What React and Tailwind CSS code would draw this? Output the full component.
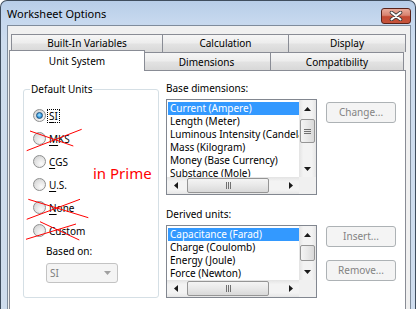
import React from "react";

const TAB_BG =
  "bg-[linear-gradient(#f6f6f6,#ededed_45%,#e2e2e2_55%,#d8d8d8)]";

function Arrow({ dir, color = "#1a1a1a" }) {
  const pts = {
    up: "0,4 3.5,0 7,4",
    down: "0,0 7,0 3.5,4",
    left: "4,0 4,7 0,3.5",
    right: "0,0 4,3.5 0,7",
  }[dir];
  const vert = dir === "up" || dir === "down";
  return (
    <svg width={vert ? 7 : 4} height={vert ? 4 : 7} viewBox={vert ? "0 0 7 4" : "0 0 4 7"}>
      <polygon points={pts} fill={color} />
    </svg>
  );
}

function VScroll({ thumbTop, thumbH }) {
  return (
    <div className="flex flex-col bg-[linear-gradient(to_right,#e3e3e3,#f3f3f3_25%,#f3f3f3_75%,#e6e6e6)]">
      <div className="h-[17px] flex items-center justify-center">
        <Arrow dir="up" />
      </div>
      <div className="flex-1">
        <div
          className="mx-px border border-[#959595] rounded-[2px] bg-[linear-gradient(to_right,#f4f4f4,#e8e8e8_50%,#d9d9d9)] flex flex-col items-center justify-center gap-px"
          style={{ marginTop: thumbTop, height: thumbH }}
        >
          {thumbH > 20 && (
            <>
              <div className="w-[7px] h-px bg-[#707070]" />
              <div className="w-[7px] h-px bg-[#707070]" />
              <div className="w-[7px] h-px bg-[#707070]" />
            </>
          )}
        </div>
      </div>
      <div className="h-[17px] flex items-center justify-center">
        <Arrow dir="down" />
      </div>
    </div>
  );
}

function HScroll() {
  return (
    <div className="flex flex-row bg-[linear-gradient(#e3e3e3,#f3f3f3_25%,#f3f3f3_75%,#e6e6e6)]">
      <div className="w-[17px] flex items-center justify-center">
        <Arrow dir="left" />
      </div>
      <div className="flex-1 flex items-stretch">
        <div className="ml-[3px] w-[82px] my-px border border-[#959595] rounded-[2px] bg-[linear-gradient(#f4f4f4,#e8e8e8_50%,#d9d9d9)] flex items-center justify-center gap-px">
          <div className="w-px h-[7px] bg-[#707070]" />
          <div className="w-px h-[7px] bg-[#707070]" />
          <div className="w-px h-[7px] bg-[#707070]" />
        </div>
      </div>
      <div className="w-[17px] flex items-center justify-center">
        <Arrow dir="right" />
      </div>
    </div>
  );
}

function ListBox({ items, className, thumbTop, thumbH }) {
  return (
    <div
      className={
        "border border-[#828790] bg-white grid grid-cols-[1fr_17px] grid-rows-[1fr_17px] " +
        className
      }
    >
      <div className="overflow-hidden pt-[2px] pl-px">
        {items.map((it, i) => (
          <div
            key={it}
            className={
              "h-[13px] leading-[13px] px-[2px] whitespace-nowrap " +
              (i === 0 ? "bg-[#3399ff] text-white" : "text-black")
            }
          >
            {it}
          </div>
        ))}
      </div>
      <VScroll thumbTop={thumbTop} thumbH={thumbH} />
      <HScroll />
      <div className="bg-[#f0f0f0]" />
    </div>
  );
}

function DisabledButton({ children, className }) {
  return (
    <div
      className={
        "w-[70px] border border-[#adb2b5] rounded-[3px] bg-[#f4f4f4] text-[#838383] flex items-center justify-center " +
        className
      }
    >
      {children}
    </div>
  );
}

function Radio({ checked, children }) {
  return (
    <div className="h-[23px] flex items-center">
      <span className="w-[13px] h-[13px] rounded-full border border-[#8e8f8f] bg-[radial-gradient(circle_at_65%_70%,#fbfbfb,#e2e2e2_55%,#c9c9c9)] flex items-center justify-center shrink-0">
        {checked && (
          <span className="w-[7px] h-[7px] rounded-full border border-[#1b4f7c] bg-[radial-gradient(circle_at_45%_40%,#a8e6ff,#3a9ee4_55%,#1b5f99)]" />
        )}
      </span>
      {children}
    </div>
  );
}

function Label({ acc, rest, focus }) {
  return (
    <span
      className={
        "ml-[1px] px-px border border-dotted leading-[12px] " +
        (focus ? "border-black" : "border-transparent")
      }
    >
      <span className="underline underline-offset-[2px]">{acc}</span>
      {rest}
    </span>
  );
}

export default function App() {
  return (
    <div className="w-[416px] h-[309px] overflow-hidden relative font-['Noto_Sans',sans-serif] text-[10px] text-black bg-white">
      <div className="h-[320px] border border-b-0 border-[#3f4d5e] rounded-t-[7px] bg-[linear-gradient(#b7cde8,#c6d8ee_20px,#cddcee_40px,#cfddee)] flex flex-col">
        {/* Title bar */}
        <div className="h-[24px] flex items-center pl-[6px] pr-[4px] shrink-0">
          <span className="text-[11px] leading-[14px] text-black pt-[1px]">
            Worksheet Options
          </span>
          <div className="ml-auto mt-[5px] w-[30px] h-[16px] rounded-[3px] border border-[#5a2219] bg-[linear-gradient(#e9ab9b,#d88370_45%,#c44a33_55%,#c6543b)] flex items-center justify-center">
            <svg width="14" height="10" viewBox="0 0 14 10">
              <path d="M2.5 1.5 L11.5 8.5 M11.5 1.5 L2.5 8.5" stroke="#3c3c3c" strokeWidth="3.6" strokeLinecap="round" />
              <path d="M2.5 1.5 L11.5 8.5 M11.5 1.5 L2.5 8.5" stroke="#ffffff" strokeWidth="2" strokeLinecap="round" />
            </svg>
          </div>
        </div>

        {/* Client area */}
        <div className="ml-[6px] mr-[4px] flex-1 border border-b-0 border-[#7f8c9c] bg-[#f0f0f0] pt-[8px] pl-px">
          {/* Tab row 1 */}
          <div className="ml-[2px] flex h-[18px]">
            <div className={"w-[152px] border border-b-0 border-[#898c95] flex items-center justify-center " + TAB_BG}>
              Built-In Variables
            </div>
            <div className={"-ml-px w-[127px] border border-b-0 border-[#898c95] flex items-center justify-center " + TAB_BG}>
              Calculation
            </div>
            <div className={"-ml-px w-[118px] border border-b-0 border-[#898c95] flex items-center justify-center " + TAB_BG}>
              Display
            </div>
          </div>
          {/* Tab row 2 */}
          <div className="flex h-[18px] items-end">
            <div className="relative z-10 -mb-px w-[136px] h-[21px] border border-b-0 border-[#898c95] bg-white flex items-center justify-center">
              Unit System
            </div>
            <div className={"-ml-[3px] w-[129px] h-[18px] border border-b-0 border-[#898c95] flex items-center justify-center pt-[2px] " + TAB_BG}>
              Dimensions
            </div>
            <div className={"-ml-px w-[134px] h-[18px] border border-b-0 border-[#898c95] flex items-center justify-center pt-[2px] " + TAB_BG}>
              Compatibility
            </div>
          </div>

          {/* Panel */}
          <div className="w-[397px] h-[260px] border border-[#898c95] bg-white flex items-start pl-[13px]">
            {/* Group box */}
            <div className="relative mt-[18px] w-[136px] h-[209px] border border-[#d5dfe5] rounded-[3px]">
              <div className="-mt-[7px] ml-[6px] px-px w-fit bg-white leading-[13px]">
                Default Units
              </div>
              <div className="mt-[8px] pl-[9px]">
                <Radio checked>
                  <Label acc="S" rest="I" focus />
                </Radio>
                <Radio>
                  <Label acc="M" rest="KS" />
                </Radio>
                <Radio>
                  <Label acc="C" rest="GS" />
                </Radio>
                <Radio>
                  <Label acc="U" rest=".S." />
                </Radio>
                <Radio>
                  <Label acc="N" rest="one" />
                </Radio>
                <Radio>
                  <Label acc="" rest="Custom" />
                </Radio>
              </div>
              <div className="ml-[22px] mt-[3px] leading-[13px]">Based on:</div>
              <div className="ml-[22px] mt-[5px] w-[72px] h-[20px] border border-[#c3c3c3] rounded-[3px] bg-[#f4f4f4] flex items-center pl-[3px] pr-[6px] text-[#7e7e7e]">
                <span>SI</span>
                <span className="ml-auto">
                  <Arrow dir="down" color="#a0a0a0" />
                </span>
              </div>
              <div className="absolute left-[69px] top-[73px] text-[15px] leading-[20px] text-[#ff0000]">
                in Prime
              </div>
            </div>

            {/* Right column */}
            <div className="ml-[7px] mt-[11px] grid grid-cols-[151px_70px] gap-x-[9px] items-start">
              <div className="col-span-2 leading-[13px] h-[13px]">Base dimensions:</div>
              <ListBox
                className="mt-[4px] h-[96px]"
                thumbTop={2}
                thumbH={24}
                items={[
                  "Current (Ampere)",
                  "Length (Meter)",
                  "Luminous Intensity (Candela)",
                  "Mass (Kilogram)",
                  "Money (Base Currency)",
                  "Substance (Mole)",
                ]}
              />
              <DisabledButton className="mt-[7px] h-[21px]">Change...</DisabledButton>
              <div className="col-span-2 mt-[13px] leading-[13px] h-[13px]">Derived units:</div>
              <ListBox
                className="mt-[4px] h-[73px]"
                thumbTop={2}
                thumbH={16}
                items={[
                  "Capacitance (Farad)",
                  "Charge (Coulomb)",
                  "Energy (Joule)",
                  "Force (Newton)",
                ]}
              />
              <div className="mt-[5px] flex flex-col gap-[13px]">
                <DisabledButton className="h-[21px]">Insert...</DisabledButton>
                <DisabledButton className="h-[21px]">Remove...</DisabledButton>
              </div>
            </div>
          </div>
        </div>
      </div>

      {/* Red strike-through annotations */}
      <svg
        className="absolute left-0 top-0 pointer-events-none"
        width="416"
        height="309"
        viewBox="0 0 416 309"
      >
        <g stroke="#ff0000" strokeWidth="1" fill="none">
          <line x1="26.7" y1="150.7" x2="81.7" y2="129.3" />
          <line x1="30" y1="131" x2="73.3" y2="146" />
          <line x1="26.7" y1="219.3" x2="80" y2="199.3" />
          <line x1="28.3" y1="199.3" x2="88.3" y2="217.7" />
          <line x1="26" y1="239.3" x2="76" y2="224" />
          <line x1="40" y1="221.7" x2="79.3" y2="240" />
        </g>
      </svg>
    </div>
  );
}
